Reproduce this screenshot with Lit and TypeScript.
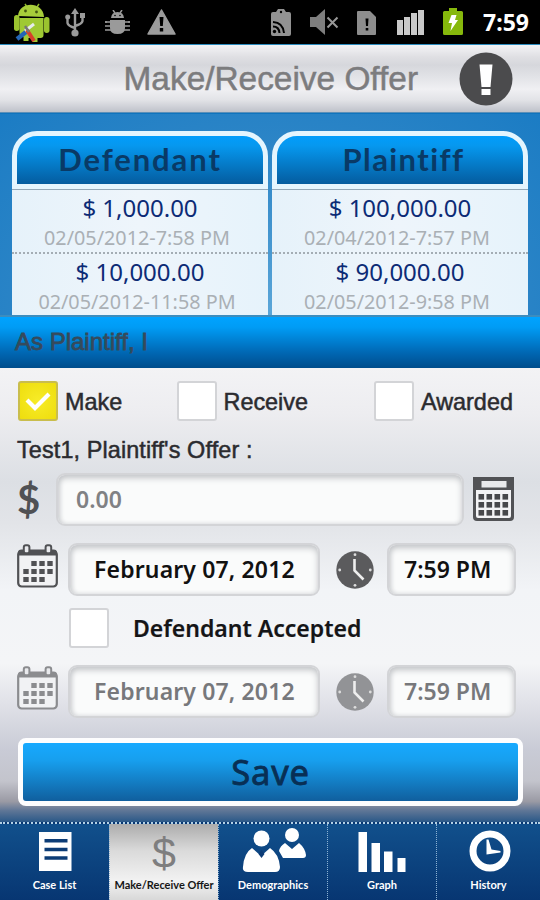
import { LitElement, html, css, svg } from "lit";
import { customElement } from "lit/decorators.js";
import { classMap } from "lit/directives/class-map.js";

const calendar = (muted: boolean) => {
  const c = muted ? "#8b8c8f" : "#505154";
  const cells: [number, number][] = [];
  for (let r = 0; r < 3; r++)
    for (let k = 0; k < 4; k++)
      if (!(r === 0 && k === 0) && !(r === 2 && k === 3)) cells.push([6.3 + k * 8, 17 + r * 8]);
  return html`<svg class="cal" width="41" height="44" viewBox="0 0 41 44">
    <rect x="1.2" y="7" width="38.6" height="35.5" rx="3.5" fill="#f1f2f4" stroke=${c} stroke-width="2.2"/>
    <path d="M1 11.500V8.500q0-3 3.500-3h32q3.500 0 3.500 3v3z" fill=${c}/>
    <rect x="6.800" y="1.300" width="5.600" height="8" rx="2" fill="#e9eaed" stroke=${c} stroke-width="2"/>
    <rect x="28.600" y="1.300" width="5.600" height="8" rx="2" fill="#e9eaed" stroke=${c} stroke-width="2"/>
    ${cells.map(([x, y]) => svg`<rect x=${x} y=${y} width="5.4" height="5" fill=${c}/>`)}
  </svg>`;
};

const clock = (muted: boolean) => html`<svg width="38" height="38" viewBox="0 0 38 38">
  <circle cx="19" cy="19" r="18.7" fill=${muted ? "#929396" : "#5b5b5d"}/>
  <path d="M18.500 8v11.500l9 9" fill="none" stroke="#eee" stroke-width="2.600"/>
  <g fill="#ddd"><circle cx="19" cy="3.700" r="1.400"/><circle cx="19" cy="34.300" r="1.400"/><circle cx="3.700" cy="19" r="1.400"/><circle cx="34.300" cy="19" r="1.400"/></g>
</svg>`;

const calculator = html`<svg width="41" height="44" viewBox="0 0 41 44">
  <path d="M0 0h41v40q0 4-4 4H4q-4 0-4-4z" fill="#515255"/>
  <rect x="8.500" y="4" width="25" height="6.500" fill="#e8e9eb"/>
  <path d="M3 13h35v26q0 2-2 2H5q-2 0-2-2z" fill="#f3f3f5"/>
  ${[0, 1, 2].map((r) => [0, 1, 2, 3].map((k) => svg`<rect x=${5.5 + k * 8} y=${17 + r * 8} width="5.6" height="5.6" fill="#47484b"/>`))}
</svg>`;

const android = html`<svg width="38" height="42" viewBox="0 0 38 42">
  <path d="M12 3l2 3M26 3l-2 3" stroke="#8fb82a" stroke-width="1.500"/>
  <rect x="1" y="14" width="5.500" height="16" rx="2.700" fill="#9bc32f"/><rect x="31" y="16" width="5.500" height="16" rx="2.700" fill="#9bc32f"/>
  <path d="M5 15C6 0 30 0 31 16z" fill="#a7cd3a"/>
  <path d="M6.500 17h24v17q0 3-3 3h-3v4h-5v-4h-4v3h-5v-4q-4 0-4-4z" fill="#9fc933"/>
  <circle cx="12.500" cy="10" r="1.400" fill="#455711"/><circle cx="23.500" cy="11" r="1.400" fill="#455711"/>
  <path d="M4 38l9-7" stroke="#2464b5" stroke-width="4.500"/><path d="M12 30l9-7" stroke="#e6ecec" stroke-width="3"/>
  <path d="M14 29l7 11" stroke="#d6412b" stroke-width="4"/><path d="M12 25l4 6" stroke="#777" stroke-width="2.500"/>
</svg>`;

const usb = html`<svg width="20" height="29" viewBox="0 0 20 29">
  <g fill="none" stroke="#9a9a9a" stroke-width="2.400"><path d="M10 4v20M10 20q-7-2-7.500-5V9M10 18q7-2 7.500-5V8"/></g>
  <g fill="#9a9a9a"><path d="M10 0l4 6H6z"/><circle cx="10" cy="25" r="3.600"/><circle cx="2.700" cy="9" r="2.500"/><path d="M15 5h5v5h-5z"/></g>
</svg>`;

const bug = html`<svg width="25" height="24" viewBox="0 0 25 24">
  <g stroke="#9a9a9a" stroke-width="1.500" fill="none"><path d="M8 0l2 3M17 0l-2 3M0 12h25M0 16h25M0 20h25M1 11v2M24 11v2"/></g>
  <path d="M6 8Q6.500 2 12.500 2T19 8z" fill="#9a9a9a"/><path d="M5 10h15v8q0 6-7.500 6T5 18z" fill="#9a9a9a"/>
  <circle cx="10" cy="5.500" r=".8"/><circle cx="15" cy="5.500" r=".8"/>
</svg>`;

const warning = html`<svg width="29" height="26" viewBox="0 0 29 26">
  <path d="M14.500 1L28 25H1z" fill="#9c9c9c" stroke="#9c9c9c" stroke-width="1.500" stroke-linejoin="round"/>
  <path d="M12.500 8h4l-.700 9h-2.600zM12.800 19h3.400v3.400h-3.400z"/>
</svg>`;

const feed = html`<svg width="20" height="28" viewBox="0 0 20 28">
  <path d="M2 4h3l2-3h6l2 3h3q2 0 2 2v20q0 2-2 2H2q-2 0-2-2V6q0-2 2-2z" fill="#929292"/>
  <circle cx="10" cy="4" r="1.200"/><circle cx="3.500" cy="23.500" r="1.700"/>
  <path d="M2 18.500q6 0 6.500 6.500M2 14q10 .5 11 11" fill="none" stroke="#000" stroke-width="2"/>
</svg>`;

const mute = html`<svg width="29" height="26" viewBox="0 0 29 26">
  <path d="M0 8h6l9-8v26l-9-8H0z" fill="#7e7e7e"/><path d="M17.500 8.500l10 10M27.500 8.500l-10 10" stroke="#989898" stroke-width="2"/>
</svg>`;

const sim = html`<svg width="20" height="24" viewBox="0 0 20 24">
  <path d="M1 0h12l6 6v17q0 1-1 1H1q-1 0-1-1V1q0-1 1-1z" fill="#8d8d8d"/>
  <path d="M8.500 7.500h3l-.500 7.500H9zM8.700 17h2.600v2.600H8.700z"/>
</svg>`;

const signal = html`<svg width="27" height="26" viewBox="0 0 27 26">
  <g fill="#c9c9c9"><path d="M0 11h6v15H0zM7 8h6v18H7zM14 4h6v22h-6zM21 1h6v25h-6z"/></g>
</svg>`;

const battery = html`<svg width="20" height="27" viewBox="0 0 20 27">
  <path d="M1.500 3H6V0h8v3h4.500Q20 3 20 4.500v21q0 1.500-1.500 1.500h-17Q0 27 0 25.500v-21Q0 3 1.500 3z" fill="#86b80c"/>
  <path d="M8.500 7h5l-1.500 5h3L7.500 23l1.500-8H5.500z" fill="#fff"/>
</svg>`;

const alertIcon = html`<svg width="54" height="54" viewBox="0 0 54 54">
  <circle cx="27" cy="27" r="26.500" fill="#4b4b4d"/>
  <path d="M20.500 12.500h13l-2 22.500h-9zM22.500 37h9v6h-9z" fill="#fff"/>
</svg>`;

const tabs = [
  {
    label: "Case List",
    icon: html`<svg width="60" height="46" viewBox="0 0 60 46"><path d="M14 4h32.500v39H14z" fill="#fff"/><path d="M19.500 12.700h23M19.500 21.500h23M19.500 30h23" stroke="#0c3c76" stroke-width="3.600"/></svg>`,
  },
  { label: "Make/Receive Offer", active: true, icon: html`<span class="dollar">$</span>` },
  {
    label: "Demographics",
    icon: html`<svg width="66" height="46" viewBox="0 0 66 46"><g fill="#fff">
      <circle cx="21.500" cy="10.500" r="8"/><path d="M12 20l9 8 9-8q9 6 10 19 0 5-5 5H8q-6 0-5-5 1-14 9-19z"/>
      <circle cx="52" cy="7" r="7"/><path d="M45 15l7 6 7-6q6 5 7 12 0 3-3 3H43l-4-7q1-5 6-8z"/></g>
      <path d="M21.500 22l3 4-3 4-3-4z" fill="#0c3c76"/></svg>`,
  },
  {
    label: "Graph",
    icon: html`<svg width="60" height="46" viewBox="0 0 60 46"><path d="M6.500 4H15v40H6.500zM19.500 15H28v29h-8.500zM32 23.500h8.500V44H32zM45.500 30h8v14h-8z" fill="#fff"/></svg>`,
  },
  {
    label: "History",
    icon: html`<svg width="60" height="46" viewBox="0 0 60 46"><circle cx="31" cy="23" r="17" fill="none" stroke="#fff" stroke-width="7"/><path d="M27.500 11.500l2 0 3 10 9 1.500v1.500l-14 2z" fill="#fff"/></svg>`,
  },
];

const offers = [
  {
    party: "Defendant",
    entries: [["$ 1,000.00", "02/05/2012-7:58 PM"], ["$ 10,000.00", "02/05/2012-11:58 PM"]],
  },
  {
    party: "Plaintiff",
    entries: [["$ 100,000.00", "02/04/2012-7:57 PM"], ["$ 90,000.00", "02/05/2012-9:58 PM"]],
  },
];

@customElement("app-root")
export class AppRoot extends LitElement {
  static styles = css`
    :host { display: flex; flex-direction: column; width: 540px; height: 900px; overflow: hidden; font-family: "Noto Sans", sans-serif; white-space: nowrap; }
    * { box-sizing: border-box; }
    svg { display: block; flex: none; }
    .status { height: 44px; background: #000; display: flex; align-items: center; padding: 0 11px 0 13px; flex: none; }
    .status .time { color: #fff; font-weight: 700; font-size: 23px; margin-left: auto; letter-spacing: 0; }
    .i-usb { margin-left: 14px; } .i-bug { margin-left: 20px; } .i-warn { margin-left: 17px; } .i-feed { margin-left: 95px; }
    .i-mute { margin-left: 19px; } .i-sim { margin: 2px 0 0 18px; } .i-signal { margin: 0 0 0 20px; } .i-bat { margin-left: 19px; margin-top: -1px; }
    .titlebar { height: 69px; flex: none; border-top: 1px solid #2b8bbd; border-bottom: 1px solid #5b8fb8; background: linear-gradient(#f4f4f6 0, #dfdfe3 18%, #d6d7dc 30%, #e2e3e7 48%, #f0f0f3 66%, #e2e3e7 82%, #bfc2ca 100%); display: flex; align-items: center; justify-content: flex-end; padding-right: 27px; }
    .titlebar h1 { margin: 0 41px 0 0; font: 400 33.4px "Liberation Sans", sans-serif; color: #7c7c7e; -webkit-text-stroke: 0.5px #7c7c7e; }
    .offers { height: 203px; flex: none; display: flex; gap: 4px; padding: 17px 12px 0; background: radial-gradient(ellipse at 50% 100%, #5ba6d8 0, #2e86c7 55%, #1b7cc4 100%); border-top: 1px solid #0f74bd; }
    .offers .party { flex: 1; display: flex; flex-direction: column; min-width: 0; }
    .party h2 { margin: 0; height: 58px; border: 5px solid #e4f5fe; border-radius: 25px 25px 0 0; background: linear-gradient(#019dfb 0, #0698ef 20%, #045c9f 100%); font: 700 31px/46px Lato, sans-serif; color: #093a66; text-align: center; letter-spacing: 1.9px; }
    .party + .party h2 { letter-spacing: 1.4px; padding-left: 7px; }
    .entry { height: 63px; background: linear-gradient(90deg, #e6f2fa, #eef5fb 50%, #e6f3fb); border-top: 1px solid #93a8b8; text-align: center; }
    .entry + .entry { border-top: 2px dotted #a4adb4; height: 64px; }
    .amount { font-size: 24px; line-height: 36px; height: 35px; color: #0c2b76; }
    .stamp { font-size: 19.800px; line-height: 25px; color: #aab0b5; padding-right: 6px; }
    .section { height: 53px; flex: none; margin-top: -1px; padding: 2px 15px 0; border-top: 2px solid #3d8dbd; background: linear-gradient(#00a3ff 0, #009cf5 20%, #0067b3 70%, #004d8c 100%); font: 400 24px/46px "Liberation Sans", sans-serif; color: #364a5b; -webkit-text-stroke: 0.8px #364a5b; }
    .form { flex: 1; background: linear-gradient(#f3f3f5 0, #ededf0 10%, #dcdfe4 25%, #e2e4e8 34%, #f2f4f7 49%, #f4f5f7 65%, #dedfe6 75%, #c9cbd6 84%, #c3c4cc 91%, #9a9aa4 95.500%, #5f7696 97.500%, #2a5888 100%); display: flex; flex-direction: column; }
    .row { display: flex; align-items: center; flex: none; }
    .helv { font: 400 23.400px/28px "Liberation Sans", sans-serif; color: #2b2b2f; -webkit-text-stroke: 0.5px #2b2b2f; }
    .check { width: 40px; height: 40px; background: #fff; border: 2px solid #d3d4d7; border-radius: 3px; flex: none; margin-right: 7px; display: grid; place-items: center; }
    .check.on { background: radial-gradient(#f7ec28, #eedd0d); border-color: #c9bd4d; }
    .options { height: 65px; padding: 0 26px 0 18px; justify-content: space-between; }
    .options .row { width: 119px; } .options .row:nth-child(2) { width: 158px; margin-right: 27px; margin-left: 27px; } .options .row:nth-child(3) { width: 140px; }
    .options .name { padding-top: 2px; }
    .caption { height: 34px; padding-left: 17px; letter-spacing: .12px; }
    .field { height: 53px; border: 2px solid #d3d4d7; border-radius: 9px; background: #fafbfb; box-shadow: inset 0 3px 6px #c3c5c8, inset 2px 0 4px #dddfe1; font-weight: 600; font-size: 23px; line-height: 49px; color: #111; flex: none; }
    .muted { color: #77787b; }
    .money { height: 71px; padding: 0 26px 7px 17px; }
    .money .sign { width: 40px; font: 700 40px/50px Lato, sans-serif; color: #505154; }
    .money .field { width: 408px; margin-right: 9px; padding-left: 18px; color: #808184; }
    .when { height: 53px; margin-top: 5px; padding: 0 25px 0 17px; }
    .cal { margin-bottom: 8px; }
    .when .date { width: 252px; margin: 0 16px 0 10px; padding-left: 24px; letter-spacing: .15px; }
    .when .hour { width: 129px; margin-left: 13px; padding-left: 15px; }
    .accept { height: 63px; padding-left: 69px; font-weight: 600; font-size: 23px; color: #151517; -webkit-text-stroke: .2px; }
    .accept .check { margin-right: 24px; }
    .accept + .when { margin-top: 6px; }
    .save { margin: 20px 17px 0 18px; height: 68px; border: 5px solid #fdfdfe; border-radius: 8px; background: linear-gradient(#17a9ff 0, #179fee 30%, #105f9e 100%); font: 400 34.500px/56px "Noto Sans", sans-serif; color: #082f55; text-align: center; flex: none; padding: 0; -webkit-text-stroke: .8px #082f55; letter-spacing: .8px; }
    .tabs { height: 78px; flex: none; display: grid; grid-template-columns: 109px 109px 109px 109px 104px; border-top: 2px dotted #b3d1e5; background: linear-gradient(#11508c, #073672); }
    .tab { display: flex; flex-direction: column; align-items: center; padding-top: 4px; color: #fff; font: 700 11px/15px Lato, sans-serif; border-left: 1px dotted #8db3d4; }
    .tab:first-child { border-left: 0; }
    .tab.active { background: linear-gradient(#acacac, #dadada 35%, #f2f2f2 75%, #d8d8d8); color: #161616; }
    .tab svg, .tab .dollar { margin-bottom: 3px; height: 46px; }
    .dollar { font: 400 43px/50px "Liberation Sans", sans-serif; color: #7e7e7f; }
  `;

  private check(on = false) {
    return html`<span class=${classMap({ check: true, on })}>${on
      ? html`<svg width="26" height="20" viewBox="0 0 26 20"><path d="M2 9l8 8L24 3" fill="none" stroke="#fff" stroke-width="4.200"/></svg>`
      : ""}</span>`;
  }

  private when(muted: boolean) {
    return html`<div class="row when">
      ${calendar(muted)}
      <div class=${classMap({ field: true, date: true, muted })}>February 07, 2012</div>
      ${clock(muted)}
      <div class=${classMap({ field: true, hour: true, muted })}>7:59 PM</div>
    </div>`;
  }

  render() {
    return html`
      <div class="status">
        ${android}<span class="i-usb">${usb}</span><span class="i-bug">${bug}</span><span class="i-warn">${warning}</span>
        <span class="i-feed">${feed}</span><span class="i-mute">${mute}</span><span class="i-sim">${sim}</span>
        <span class="i-signal">${signal}</span><span class="i-bat">${battery}</span>
        <span class="time">7:59</span>
      </div>
      <div class="titlebar"><h1>Make/Receive Offer</h1>${alertIcon}</div>
      <div class="offers">
        ${offers.map((o) => html`<div class="party"><h2>${o.party}</h2>
          ${o.entries.map(([a, d]) => html`<div class="entry"><div class="amount">${a}</div><div class="stamp">${d}</div></div>`)}
        </div>`)}
      </div>
      <div class="section">As Plaintiff, I</div>
      <div class="form">
        <div class="row options helv">
          <div class="row">${this.check(true)}<span class="name">Make</span></div>
          <div class="row">${this.check()}<span class="name">Receive</span></div>
          <div class="row">${this.check()}<span class="name">Awarded</span></div>
        </div>
        <div class="row caption helv">Test1, Plaintiff's Offer :</div>
        <div class="row money"><span class="sign">$</span><div class="field">0.00</div>${calculator}</div>
        ${this.when(false)}
        <div class="row accept">${this.check()}Defendant Accepted</div>
        ${this.when(true)}
        <button class="save">Save</button>
      </div>
      <div class="tabs">
        ${tabs.map((t) => html`<div class=${classMap({ tab: true, active: !!t.active })}>${t.icon}<span>${t.label}</span></div>`)}
      </div>`;
  }
}
